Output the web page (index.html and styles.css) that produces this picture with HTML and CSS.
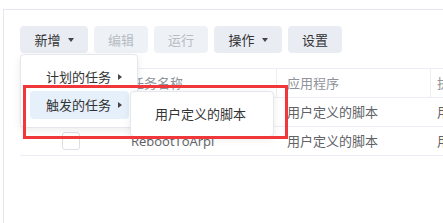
FILE: index.html
```html
<!DOCTYPE html>
<html lang="zh">
<head>
<meta charset="utf-8">
<link rel="stylesheet" href="styles.css">
</head>
<body>
<div class="panel">
  <div class="toolbar">
    <div class="dd">
      <button class="btn wide">新增<span class="caret"></span></button>
      <div class="menu">
        <div class="item">计划的任务<span class="rcaret"></span></div>
        <div class="item active">触发的任务<span class="rcaret"></span>
          <div class="submenu">
            <div class="item">用户定义的脚本</div>
          </div>
        </div>
      </div>
    </div>
    <button class="btn disabled">编辑</button>
    <button class="btn disabled">运行</button>
    <button class="btn wide">操作<span class="caret"></span></button>
    <button class="btn">设置</button>
  </div>
  <div class="table">
    <div class="row head">
      <div class="c c1"></div>
      <div class="c c2">任务名称</div>
      <div class="c c3">应用程序</div>
      <div class="c c4">执行者</div>
    </div>
    <div class="row">
      <div class="c c1"><span class="cb"></span></div>
      <div class="c c2">AutoUpdate</div>
      <div class="c c3">用户定义的脚本</div>
      <div class="c c4">用户</div>
    </div>
    <div class="row">
      <div class="c c1"><span class="cb"></span></div>
      <div class="c c2 latin">RebootToArpl</div>
      <div class="c c3">用户定义的脚本</div>
      <div class="c c4">用户</div>
    </div>
  </div>
  <div class="mark"></div>
</div>
</body>
</html>
```

FILE: styles.css
```css
html, body {
  margin: 0;
  padding: 0;
  background: #fff;
  overflow: hidden;
}
body {
  width: 443px;
  height: 223px;
  font-family: "Noto Sans CJK SC", "Noto Sans", sans-serif;
  font-size: 13px;
  color: #333;
}
.panel {
  position: relative;
  margin: 9px 0 0 3px;
  height: 214px;
  border-left: 1px solid #e4e7ed;
  border-top: 1px solid #e4e7ed;
  padding: 16px 0 0 16px;
  box-sizing: border-box;
}
.toolbar {
  display: flex;
  gap: 6px;
  height: 27px;
  position: relative;
  z-index: 5;
}
.dd {
  position: relative;
}
.btn {
  height: 27px;
  width: 54px;
  padding: 0;
  border: none;
  border-radius: 4px;
  background: #e9edf3;
  color: #333;
  font-family: inherit;
  font-size: 13px;
  line-height: 27px;
  display: flex;
  align-items: center;
  justify-content: center;
}
.btn.wide {
  width: 68px;
}
.btn.disabled {
  color: #b7bcc4;
  background: #eef1f5;
}
.caret {
  margin-left: 7px;
  width: 0;
  height: 0;
  border-left: 3.5px solid transparent;
  border-right: 3.5px solid transparent;
  border-top: 4px solid #444;
  margin-top: 1px;
}
.menu {
  position: absolute;
  left: 0;
  top: 28px;
  width: 118px;
  box-sizing: border-box;
  padding: 8px 8px 8px 9px;
  background: #fff;
  border: 1px solid #e4e7ed;
  border-radius: 4px;
  box-shadow: 0 2px 8px rgba(0, 0, 0, 0.08);
}
.item {
  position: relative;
  height: 28px;
  line-height: 28px;
  padding-left: 16px;
  border-radius: 4px;
  color: #333;
  white-space: nowrap;
  display: flex;
  align-items: center;
}
.item.active {
  background: #e6f0fb;
}
.rcaret {
  margin-left: 7px;
  width: 0;
  height: 0;
  border-top: 3.5px solid transparent;
  border-bottom: 3.5px solid transparent;
  border-left: 4px solid #444;
}
.submenu {
  position: absolute;
  left: 100px;
  top: 0;
  width: 144px;
  box-sizing: border-box;
  padding: 8px;
  background: #fff;
  border: 1px solid #e4e7ed;
  border-radius: 4px;
  box-shadow: 0 2px 8px rgba(0, 0, 0, 0.08);
}
.submenu .item {
  padding-left: 16px;
}
.table {
  margin-top: 15px;
  border-top: 1px solid #ebeef5;
}
.row {
  display: flex;
  height: 28px;
  border-bottom: 1px solid #ebeef5;
  color: #606266;
}
.row.head {
  color: #909399;
}
.c {
  line-height: 28px;
  padding-left: 10px;
  box-sizing: border-box;
  white-space: nowrap;
  overflow: hidden;
  flex: none;
}
.head .c {
  border-right: 1px solid #ebeef5;
}
.c1 {
  width: 101px;
  padding: 0;
  display: flex;
  align-items: center;
  justify-content: center;
}
.c2 { width: 156px; }
.c3 { width: 154px; }
.c4 { width: 40px; padding-left: 6px; }
.latin {
  font-family: "Open Sans", "Noto Sans", sans-serif;
}
.cb {
  width: 16px;
  height: 16px;
  border: 1px solid #dcdfe6;
  border-radius: 3px;
  background: #fff;
}
.mark {
  position: absolute;
  left: 19px;
  top: 75px;
  width: 265px;
  height: 54px;
  box-sizing: border-box;
  border: 3px solid #f0383b;
  z-index: 10;
}
```
